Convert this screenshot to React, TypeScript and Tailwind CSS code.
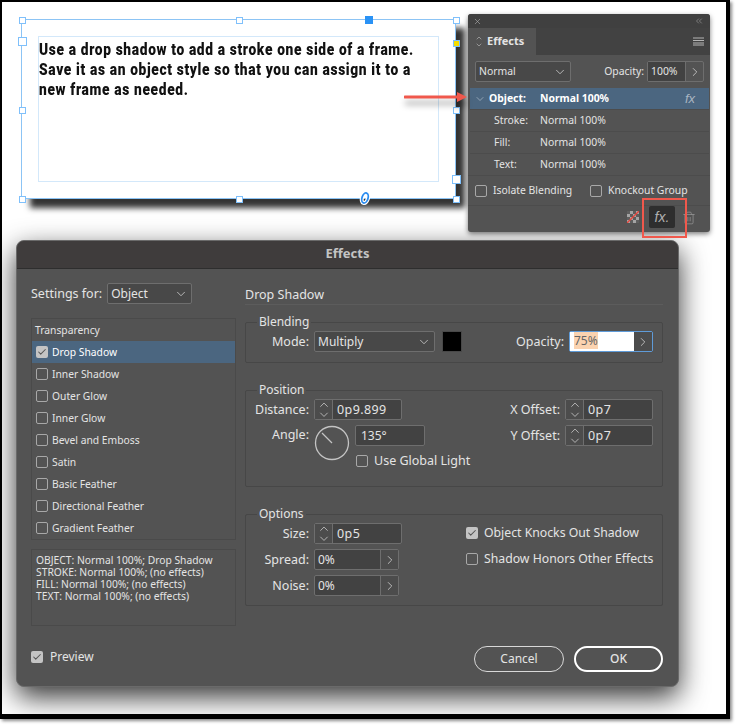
import { Check, ChevronDown, ChevronRight, ChevronUp, ChevronsLeft, Trash2, X } from 'lucide-react';
import type { ReactNode } from 'react';

const EFFECTS = [
  'Inner Shadow',
  'Outer Glow',
  'Inner Glow',
  'Bevel and Emboss',
  'Satin',
  'Basic Feather',
  'Directional Feather',
  'Gradient Feather',
];

const LAYERS = ['Stroke:', 'Fill:', 'Text:'];

// selection handles on the text frame, x / y relative to the frame's corner
const HANDLES = [
  'left-[-3px] top-[-3px] w-[7px] h-[7px]',
  'left-[214px] top-[-3px] w-[7px] h-[7px]',
  'left-[431px] top-[-3px] w-[7px] h-[7px]',
  'left-[-4px] top-[17px] w-[9px] h-[9px]',
  'left-[-3px] top-[87px] w-[7px] h-[7px]',
  'left-[431px] top-[87px] w-[7px] h-[7px]',
  'left-[430px] top-[155px] w-[9px] h-[9px]',
  'left-[-3px] top-[176px] w-[7px] h-[7px]',
  'left-[214px] top-[176px] w-[7px] h-[7px]',
  'left-[431px] top-[176px] w-[7px] h-[7px]',
];

function CheckBox({ checked = false }: { checked?: boolean }) {
  return (
    <span
      className={`flex h-[12px] w-[12px] shrink-0 items-center justify-center rounded-[2px] ${
        checked ? 'bg-[#c4c4c4]' : 'border border-[#a8a8a8]'
      }`}
    >
      {checked && <Check size={10} strokeWidth={2.5} className="text-[#555555]" />}
    </span>
  );
}

function Select({ value, className }: { value: string; className: string }) {
  return (
    <div className={`flex h-[21px] items-center justify-between rounded-[2px] border border-[#6e6e6e] bg-[#484848] pl-[3px] pr-[3px] ${className}`}>
      <span>{value}</span>
      <ChevronDown size={14} strokeWidth={1.2} />
    </div>
  );
}

function Stepper({ value, className }: { value: string; className: string }) {
  return (
    <div className={`flex h-[21px] rounded-[2px] border border-[#6e6e6e] bg-[#424242] ${className}`}>
      <div className="flex w-[18px] shrink-0 flex-col items-center justify-center border-r border-[#6e6e6e] bg-[#4c4c4c]">
        <ChevronUp size={14} strokeWidth={1.2} className="-my-[2px]" />
        <ChevronDown size={14} strokeWidth={1.2} className="-my-[2px]" />
      </div>
      <span className="pl-[4px] text-[12.5px] leading-[19px] tracking-[0.4px]">{value}</span>
    </div>
  );
}

function PercentField({ value }: { value: string }) {
  return (
    <div className="flex h-[21px] w-[85px] rounded-[2px] border border-[#6e6e6e] bg-[#424242]">
      <span className="flex-1 pl-[3px] text-[12px] leading-[19px]">{value}</span>
      <span className="flex w-[18px] items-center justify-center border-l border-[#6e6e6e] bg-[#4c4c4c]">
        <ChevronRight size={14} strokeWidth={1.2} />
      </span>
    </div>
  );
}

function Label({ children, className = '' }: { children: ReactNode; className?: string }) {
  return <span className={`w-[68px] shrink-0 pr-[5px] text-right ${className}`}>{children}</span>;
}

function Group({ title, className, children }: { title: string; className: string; children: ReactNode }) {
  return (
    <fieldset className={`rounded-[2px] border border-[#474747] ${className}`}>
      <legend className="ml-[11px] px-[2px] text-[12px] leading-[14px]">{title}</legend>
      {children}
    </fieldset>
  );
}

function TextFrame() {
  return (
    <div className="relative mt-[5px] h-[180px] w-[435px] shrink-0 border border-[#8cc4f5] bg-white p-[16px] shadow-[9px_9px_6px_rgba(0,0,0,0.8)]">
      <div className="h-full border border-[#d3e8fa] pt-[2px]">
        <p className="w-[500px] origin-top-left scale-x-[0.81] font-['Roboto',sans-serif] text-[17px] font-black leading-[20px] tracking-[0.8px] text-[#111111]">
          Use a drop shadow to add a stroke one side of a frame.
          <br />
          Save it as an object style so that you can assign it to a
          <br />
          new frame as needed.
        </p>
      </div>
      {HANDLES.map((pos) => (
        <span key={pos} className={`absolute border border-[#7fc0fb] bg-white ${pos}`} />
      ))}
      <span className="absolute left-[343px] top-[-4px] h-[8px] w-[8px] bg-[#2a92f5]" />
      <span className="absolute left-[431px] top-[20px] h-[7px] w-[7px] border border-[#7fc0fb] bg-[#f5dc00]" />
      <svg className="absolute left-[336px] top-[171px]" width="14" height="14" viewBox="0 0 14 14">
        <ellipse cx="7" cy="7" rx="3" ry="5.2" transform="rotate(18 7 7)" fill="none" stroke="#ffffff" strokeWidth="4" />
        <ellipse cx="7" cy="7" rx="3" ry="5.2" transform="rotate(18 7 7)" fill="none" stroke="#2a8cf0" strokeWidth="1.8" />
      </svg>
    </div>
  );
}

function EffectsPanel() {
  return (
    <div className="relative ml-[12px] h-[218px] w-[242px] shrink-0 rounded-[3px] bg-[#535353] text-[10.4px] text-[#e4e4e4] shadow-[0_2px_5px_rgba(0,0,0,0.5)]">
      <div className="flex h-[14px] items-center justify-between rounded-t-[3px] bg-[#404040] pl-[5px] pr-[6px] text-[#b5b5b5]">
        <X size={9} strokeWidth={1.5} />
        <ChevronsLeft size={10} strokeWidth={1.2} />
      </div>
      <div className="flex h-[27px] items-stretch justify-between bg-[#424242]">
        <div className="flex w-[68px] items-center gap-[4px] bg-[#535353] pl-[7px] font-bold">
          <span className="flex flex-col text-[#b5b5b5]">
            <ChevronUp size={8} strokeWidth={2} className="-mb-[1px]" />
            <ChevronDown size={8} strokeWidth={2} />
          </span>
          <span className="text-[11px]">Effects</span>
        </div>
        <svg className="mr-[6px] self-center" width="11" height="9" viewBox="0 0 11 9" stroke="#b5b5b5" strokeWidth="1">
          <path d="M0 1h11M0 3.5h11M0 6h11M0 8h11" />
        </svg>
      </div>
      <div className="flex items-center pl-[7px] pr-[6px] pt-[6px]">
        <Select value="Normal" className="w-[96px]" />
        <span className="ml-auto pr-[3px]">Opacity:</span>
        <div className="flex h-[21px] w-[57px] rounded-[2px] border border-[#6e6e6e]">
          <span className="flex-1 bg-[#424242] pl-[3px] leading-[19px]">100%</span>
          <span className="flex w-[18px] items-center justify-center border-l border-[#6e6e6e]">
            <ChevronRight size={14} strokeWidth={1.2} />
          </span>
        </div>
      </div>
      <div className="ml-[2px] mr-[1px] mt-[6px]">
        <div className="flex h-[21px] items-center bg-[#4b6680] font-bold text-white">
          <ChevronDown size={12} strokeWidth={1.3} className="ml-[4px] text-[#b8c4d0]" />
          <span className="ml-[3px] w-[51px]">Object:</span>
          <span>Normal 100%</span>
          <span className="ml-auto mr-[14px] font-['Liberation_Sans',sans-serif] text-[13px] font-normal italic text-[#a9b5c1]">fx</span>
        </div>
        {LAYERS.map((layer) => (
          <div key={layer} className="flex h-[22px] items-center border-t border-[#4c4c4c]">
            <span className="w-[70px] pl-[24px]">{layer}</span>
            <span>Normal 100%</span>
          </div>
        ))}
      </div>
      <div className="flex h-[31px] items-center border-b border-t border-[#4c4c4c] pl-[7px]">
        <CheckBox />
        <span className="ml-[6px] w-[97px]">Isolate Blending</span>
        <CheckBox />
        <span className="ml-[6px]">Knockout Group</span>
      </div>
      <div className="flex h-[25px] items-start justify-end pr-[14px]">
        <svg className="mt-[5px]" width="12" height="12" viewBox="0 0 12 12">
          <rect width="12" height="12" fill="#a5a5a5" />
          <path d="M0 0h3v3H0zM6 0h3v3H6zM3 3h3v3H3zM9 3h3v3H9zM0 6h3v3H0zM6 6h3v3H6zM3 9h3v3H3zM9 9h3v3H9z" fill="#5e5e5e" />
          <path d="M0 12L12 0" stroke="#e8443a" strokeWidth="1.3" />
        </svg>
        <span className="ml-[10px] flex h-[22px] w-[26px] items-center justify-center rounded-[2px] bg-[#2e2e2e] font-['Liberation_Sans',sans-serif] text-[14px] italic text-[#b0b0b0]">
          fx.
        </span>
        <Trash2 size={14} strokeWidth={1.2} className="ml-[7px] mt-[5px] text-[#9a9a9a]" />
      </div>
      <span className="absolute left-[174px] top-[184px] h-[40px] w-[45px] border-2 border-[#f0584c]" />
    </div>
  );
}

function EffectsDialog() {
  return (
    <div className="mx-[14px] h-[447px] w-[663px] overflow-hidden rounded-[8px] border border-[#6a6a6a] bg-[#535353] text-[12.5px] leading-[14px] text-[#e4e4e4] shadow-[0_10px_28px_rgba(0,0,0,0.8)]">
      <div className="flex h-[28px] items-center justify-center border-b border-[#2e2e2e] bg-[#3f3c3c] pb-[3px] text-[13px] font-bold text-[#c4c4c4]">
        Effects
      </div>
      <div className="flex pl-[14px] pr-[15px]">
        <div className="w-[205px] shrink-0">
          <div className="mt-[14px] flex h-[21px] items-center gap-[5px]">
            <span>Settings for:</span>
            <Select value="Object" className="w-[85px] text-[12px]" />
          </div>
          <div className="mt-[14px] border border-[#4a4a4a] text-[10.3px]">
            <div className="flex h-[22px] items-center pl-[3px]">Transparency</div>
            <div className="flex h-[22px] items-center gap-[4px] bg-[#4b6680] pl-[4px] text-white">
              <CheckBox checked />
              <span>Drop Shadow</span>
            </div>
            {EFFECTS.map((effect) => (
              <div key={effect} className="flex h-[22px] items-center gap-[4px] pl-[4px]">
                <CheckBox />
                <span>{effect}</span>
              </div>
            ))}
          </div>
          <div className="mt-[9px] h-[77px] border border-[#4a4a4a] pl-[4px] pt-[4px] text-[10.3px] leading-[12px]">
            <p>OBJECT: Normal 100%; Drop Shadow</p>
            <p>STROKE: Normal 100%; (no effects)</p>
            <p>FILL: Normal 100%; (no effects)</p>
            <p>TEXT: Normal 100%; (no effects)</p>
          </div>
          <div className="mt-[24px] flex items-center gap-[7px] text-[12px]">
            <CheckBox checked />
            <span>Preview</span>
          </div>
        </div>

        <div className="ml-[9px] flex-1">
          <div className="flex h-[36px] items-end border-b border-[#5c5c5c] pb-[1px]">
            <span className="pb-[1px]">Drop Shadow</span>
          </div>
          <Group title="Blending" className="mt-[10px] h-[48px]">
            <div className="mt-[2px] flex items-center">
              <Label>Mode:</Label>
              <Select value="Multiply" className="w-[121px] text-[12px]" />
              <span className="ml-[7px] h-[21px] w-[20px] border border-[#484848] bg-black" />
              <span className="ml-auto pr-[5px]">Opacity:</span>
              <div className="mr-[9px] flex h-[21px] w-[84px] rounded-[2px] border border-[#5f9bd8]">
                <span className="flex-1 bg-white pl-[4px] pt-[2px] text-[12px]">
                  <span className="bg-[#fbd3b0] text-[#666666]">75%</span>
                </span>
                <span className="flex w-[18px] items-center justify-center bg-[#4c4c4c]">
                  <ChevronRight size={14} strokeWidth={1.2} />
                </span>
              </div>
            </div>
          </Group>
          <Group title="Position" className="mt-[20px] h-[104px]">
            <div className="mt-[2px] flex">
              <div>
                <div className="flex items-center">
                  <Label>Distance:</Label>
                  <Stepper value="0p9.899" className="w-[88px]" />
                </div>
                <div className="mt-[5px] flex">
                  <Label className="pt-[3px]">Angle:</Label>
                  <svg width="36" height="36" viewBox="0 0 36 36" className="shrink-0" fill="none" stroke="#c4c4c4">
                    <circle cx="18" cy="18" r="16.5" strokeWidth="1.3" />
                    <path d="M18 18L8 8" strokeWidth="1.3" />
                  </svg>
                  <div className="ml-[5px]">
                    <div className="h-[21px] w-[70px] rounded-[2px] border border-[#6e6e6e] bg-[#424242] pl-[5px] text-[12px] leading-[19px]">135°</div>
                    <div className="ml-[1px] mt-[8px] flex items-center gap-[6px]">
                      <CheckBox />
                      <span>Use Global Light</span>
                    </div>
                  </div>
                </div>
              </div>
              <div className="ml-auto mr-[9px]">
                <div className="flex items-center">
                  <Label>X Offset:</Label>
                  <Stepper value="0p7" className="w-[88px]" />
                </div>
                <div className="mt-[5px] flex items-center">
                  <Label>Y Offset:</Label>
                  <Stepper value="0p7" className="w-[88px]" />
                </div>
              </div>
            </div>
          </Group>
          <Group title="Options" className="mt-[20px] h-[99px]">
            <div className="mt-[2px] flex">
              <div className="flex flex-col gap-[5px]">
                <div className="flex items-center">
                  <Label>Size:</Label>
                  <Stepper value="0p5" className="w-[88px]" />
                </div>
                <div className="flex items-center">
                  <Label>Spread:</Label>
                  <PercentField value="0%" />
                </div>
                <div className="flex items-center">
                  <Label>Noise:</Label>
                  <PercentField value="0%" />
                </div>
              </div>
              <div className="ml-[64px] flex flex-col gap-[12px] pt-[3px] text-[12.25px]">
                <div className="flex items-center gap-[6px]">
                  <CheckBox checked />
                  <span>Object Knocks Out Shadow</span>
                </div>
                <div className="flex items-center gap-[6px]">
                  <CheckBox />
                  <span>Shadow Honors Other Effects</span>
                </div>
              </div>
            </div>
          </Group>
          <div className="mt-[40px] flex justify-end gap-[10px] text-[12px]">
            <button className="h-[26px] w-[90px] rounded-full border border-[#d8d8d8]">Cancel</button>
            <button className="h-[26px] w-[89px] rounded-full border-2 border-white font-medium">OK</button>
          </div>
        </div>
      </div>
    </div>
  );
}

export default function App() {
  return (
    <div className="h-[725px] w-[736px] bg-white font-['Noto_Sans',sans-serif]">
      <div className="relative h-[719px] w-[730px] overflow-hidden border-b-[5px] border-l-2 border-r-[4px] border-t-2 border-black bg-white shadow-[2px_2px_3px_rgba(0,0,0,0.45)]">
        <div className="flex h-[238px] items-start pl-[19px] pt-[12px]">
          <TextFrame />
          <EffectsPanel />
        </div>
        <svg className="absolute left-[402px] top-[88px] drop-shadow-[1px_6px_3px_rgba(0,0,0,0.4)]" width="64" height="14" viewBox="0 0 64 14">
          <path d="M1 7h54" stroke="#f0584c" strokeWidth="3" strokeLinecap="round" />
          <path d="M53 2l10 5-10 5z" fill="#f0584c" />
        </svg>
        <EffectsDialog />
      </div>
    </div>
  );
}
